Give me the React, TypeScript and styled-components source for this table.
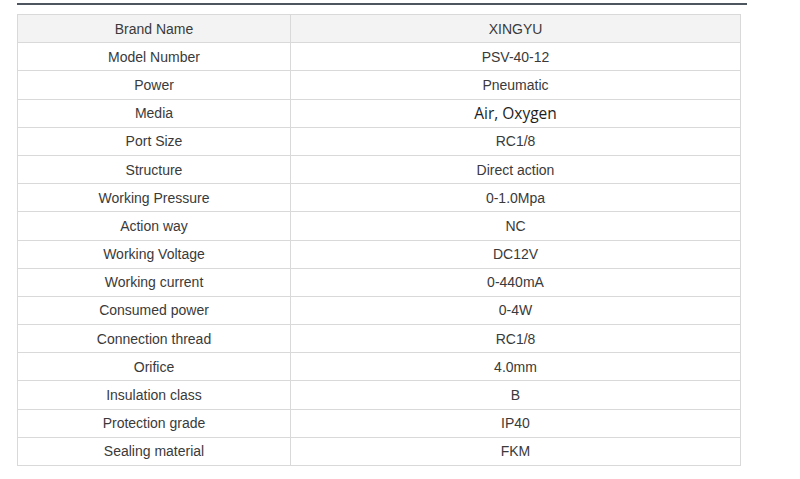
import styled, { createGlobalStyle } from "styled-components";

const GlobalStyle = createGlobalStyle`
  html, body {
    margin: 0;
    padding: 0;
    background: #ffffff;
  }
  body {
    font-family: "Liberation Sans", Arial, sans-serif;
  }
`;

const Page = styled.div`
  width: 800px;
  height: 479px;
  padding: 3px 0 0 17px;
  box-sizing: border-box;
`;

const Rule = styled.div`
  width: 730px;
  height: 2px;
  background: #4d565e;
`;

const SpecTable = styled.table`
  margin-top: 9px;
  width: 724px;
  border-collapse: collapse;
  table-layout: fixed;
  border: 1px solid #d9d9d9;
  font-size: 14px;
  color: #3a3a3a;
`;

const Row = styled.tr<{ $head?: boolean }>`
  background: ${(p) => (p.$head ? "#f3f3f3" : "#ffffff")};
`;

const Cell = styled.td<{ $special?: boolean }>`
  height: 27.2px;
  padding: 0;
  text-align: center;
  vertical-align: middle;
  border: 1px solid #d9d9d9;
  ${(p) =>
    p.$special &&
    `
    font-family: "Open Sans", "Noto Sans", sans-serif;
    font-size: 15.5px;
    font-weight: 500;
    color: #1e1e1e;
  `}
`;

const specs: [string, string][] = [
  ["Brand Name", "XINGYU"],
  ["Model Number", "PSV-40-12"],
  ["Power", "Pneumatic"],
  ["Media", "Air, Oxygen"],
  ["Port Size", "RC1/8"],
  ["Structure", "Direct action"],
  ["Working Pressure", "0-1.0Mpa"],
  ["Action way", "NC"],
  ["Working Voltage", "DC12V"],
  ["Working current", "0-440mA"],
  ["Consumed power", "0-4W"],
  ["Connection thread", "RC1/8"],
  ["Orifice", "4.0mm"],
  ["Insulation class", "B"],
  ["Protection grade", "IP40"],
  ["Sealing material", "FKM"],
];

const App = () => {
  return (
    <>
      <GlobalStyle />
      <Page>
        <Rule />
        <SpecTable>
          <colgroup>
            <col style={{ width: "273px" }} />
            <col />
          </colgroup>
          <tbody>
            {specs.map(([name, value], i) => (
              <Row key={name} $head={i === 0}>
                <Cell>{name}</Cell>
                <Cell $special={name === "Media"}>{value}</Cell>
              </Row>
            ))}
          </tbody>
        </SpecTable>
      </Page>
    </>
  );
};

export default App;
